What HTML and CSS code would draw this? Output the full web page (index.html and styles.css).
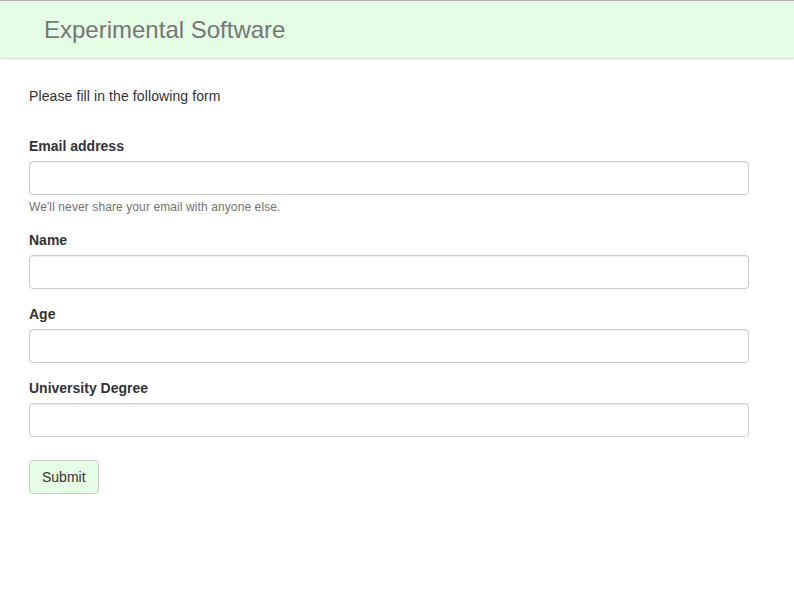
FILE: index.html
```html
<!DOCTYPE html>
<html>
<head>
<meta charset="utf-8">
<link rel="stylesheet" href="styles.css">
</head>
<body>
<nav class="navbar">
  <span class="brand">Experimental Software</span>
</nav>
<main class="content">
  <p class="intro">Please fill in the following form</p>
  <form class="form">
    <div class="group">
      <label class="label">Email address</label>
      <input class="input" type="email">
      <small class="help">We'll never share your email with anyone else.</small>
    </div>
    <div class="group">
      <label class="label">Name</label>
      <input class="input" type="text">
    </div>
    <div class="group">
      <label class="label">Age</label>
      <input class="input" type="text">
    </div>
    <div class="group">
      <label class="label">University Degree</label>
      <input class="input" type="text">
    </div>
    <button class="submit" type="button">Submit</button>
  </form>
</main>
</body>
</html>
```

FILE: styles.css
```css
* { box-sizing: border-box; }
html, body { margin: 0; padding: 0; background: #fff; }
body {
  font-family: "Liberation Sans", Arial, sans-serif;
  font-size: 14px;
  line-height: 20px;
  color: #333;
}
.navbar {
  height: 59px;
  background: #e4fde4;
  border-top: 1px solid #b0b0b0;
  border-bottom: 1px solid #dcdcdc;
  box-shadow: 0 1px 2px rgba(0,0,0,0.06);
  display: flex;
  align-items: center;
  padding: 0 0 0 44px;
}
.brand {
  font-size: 24px;
  color: #777;
  line-height: 30px;
}
.content {
  padding: 27px 45px 0 29px;
}
.intro {
  margin: 0 0 30px 0;
  letter-spacing: 0.1px;
}
.form {
  width: 720px;
}
.group {
  margin-bottom: 15px;
  display: flex;
  flex-direction: column;
}
.label {
  font-weight: bold;
  margin-bottom: 5px;
  line-height: 20px;
}
.input {
  height: 34px;
  width: 100%;
  border: 1px solid #ccc;
  border-radius: 4px;
  background: #fff;
  box-shadow: inset 0 1px 1px rgba(0,0,0,0.075);
  font: inherit;
  padding: 6px 12px;
}
.help {
  display: block;
  margin-top: 4px;
  font-size: 12px;
  line-height: 17px;
  color: #737373;
  margin-bottom: -1px;
  letter-spacing: 0.1px;
}
.submit {
  margin-top: 8px;
  height: 34px;
  padding: 6px 12px;
  font: inherit;
  color: #333;
  background: #e6fde6;
  border: 1px solid #ccc;
  border-radius: 4px;
}
```
